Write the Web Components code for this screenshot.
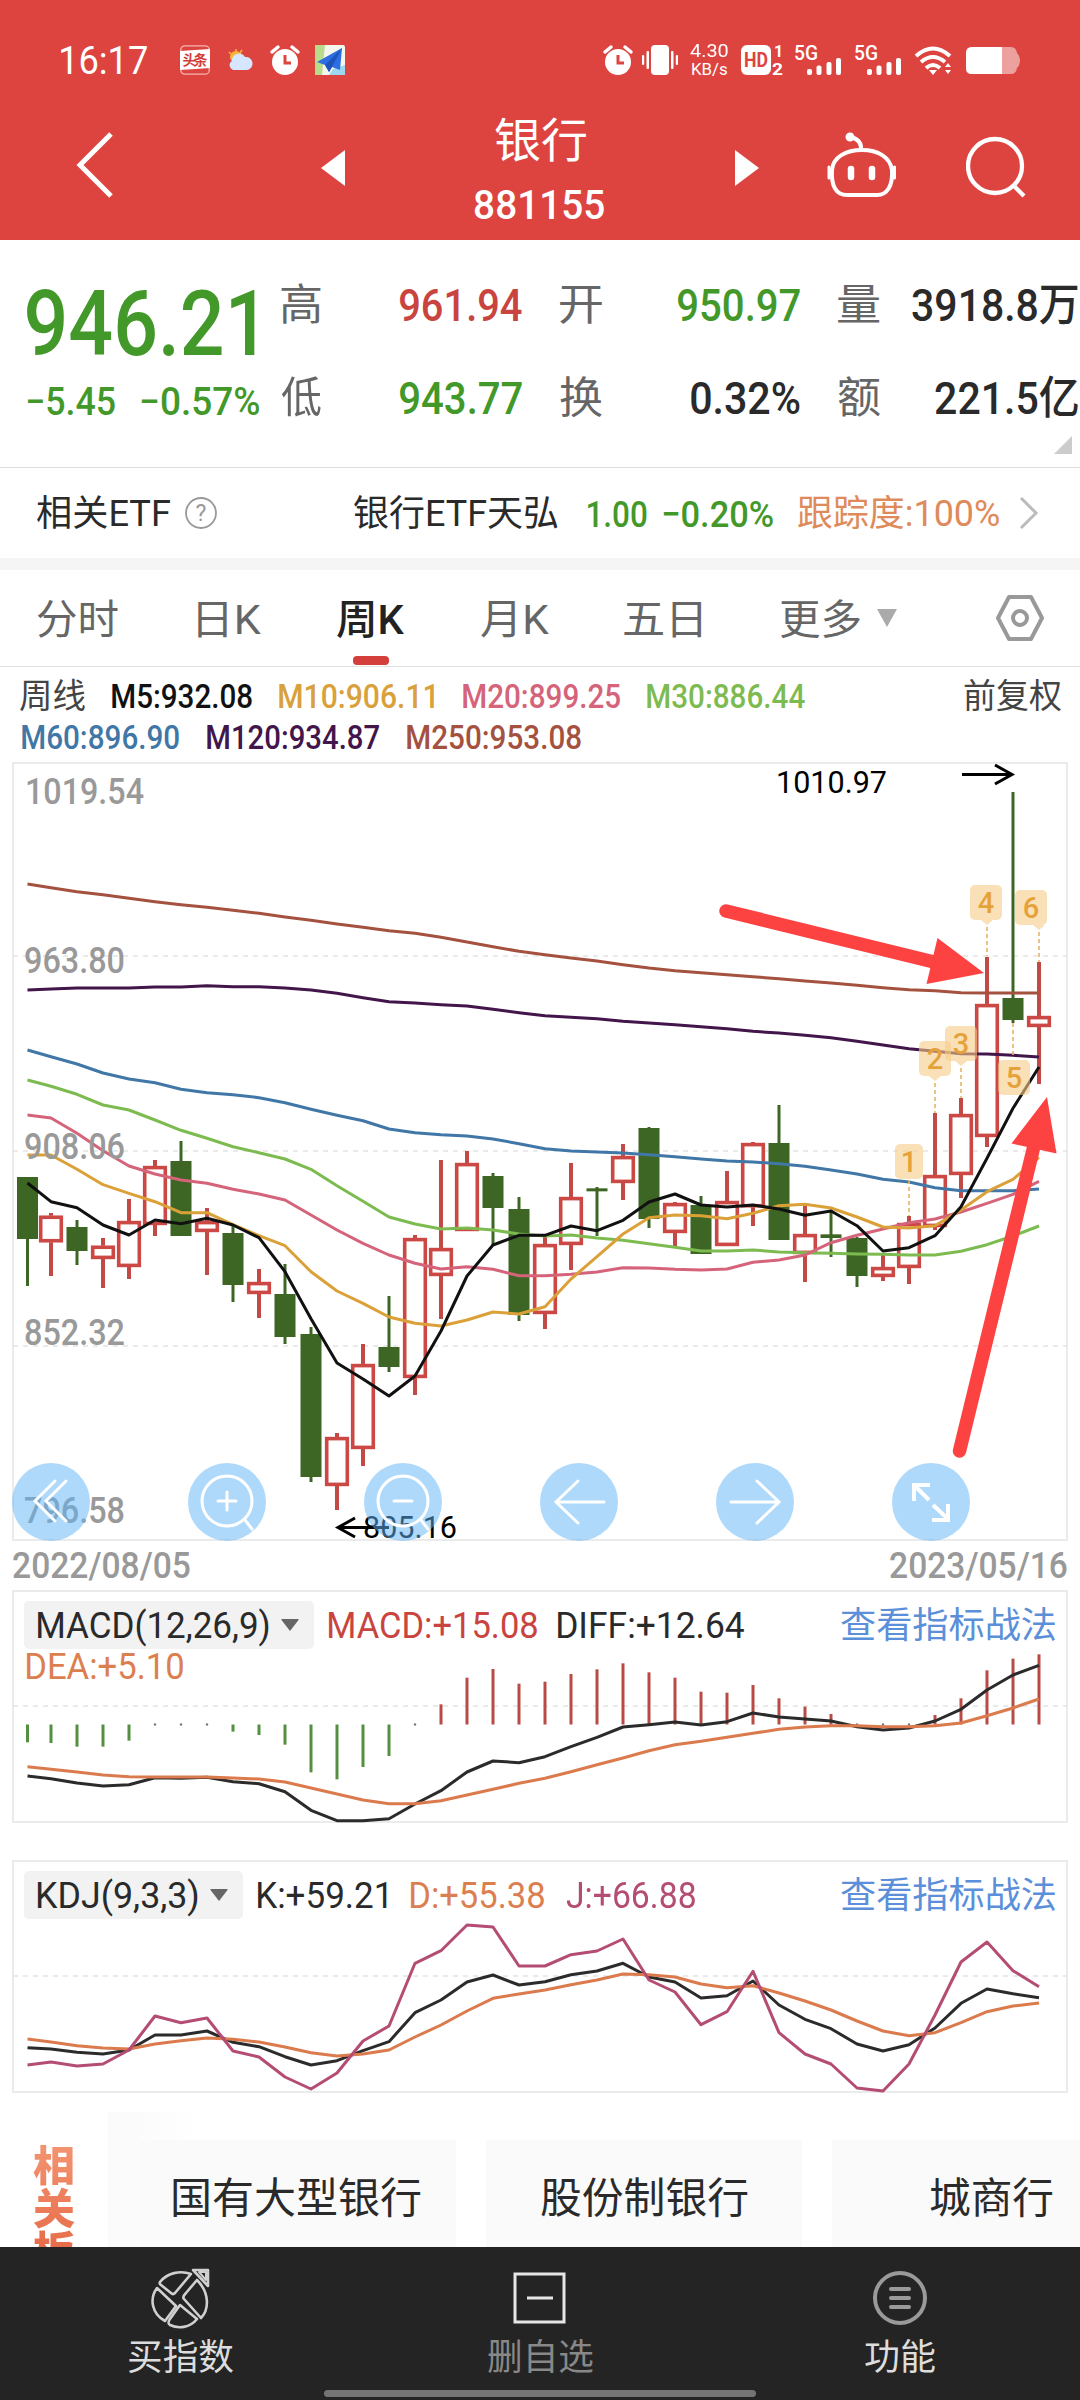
<!DOCTYPE html>
<html lang="zh-CN">
<head>
<meta charset="utf-8">
<meta name="viewport" content="width=1080">
<title>银行 881155</title>
<style>
html, body {
    margin: 0;
    padding: 0;
}
body {
    width: 1080px;
    height: 2400px;
    overflow: hidden;
    background: #fff;
    color: #2a2a2a;
    font-family: Roboto, "Noto Sans CJK SC", sans-serif;
}
</style>
</head>
<body>
<stock-page></stock-page>

<script>
const GREEN = "#43982a";
const RED = "#c9443f";
const ORANGE = "#dc7f50";

// week k data: [up, high, body top, body bottom, low], thirds of a pixel below y = 1120
const candles = [
    [0,171,171,357,498],[1,279,287,367,468],[0,300,321,393,435],[1,354,377,417,504],
    [1,237,303,441,477],[1,120,138,315,348],[0,63,123,348,348],[1,264,303,336,465],
    [0,318,339,495,546],[1,447,486,522,594],[0,432,522,651,672],[0,621,642,1071,1086],
    [1,939,951,1098,1170],[1,672,732,987,1038],[0,528,681,741,756],[1,345,354,774,825],
    [1,120,384,468,597],[1,93,129,333,333],[0,159,168,264,378],[0,231,267,585,603],
    [1,345,372,582,627],[1,129,231,375,450],[0,201,205,214,348],[1,72,108,189,240],
    [0,21,24,297,324],[1,246,249,339,378],[0,228,255,402,402],[1,153,243,378,378],
    [1,66,69,262,318],[0,-45,69,360,360],[1,258,342,402,486],[0,270,343,354,411],
    [0,351,354,468,501],[1,402,441,471,483],[1,288,309,444,492],[1,-21,165,321,330],
    [1,-66,-18,165,234],[1,-489,-348,51,81],[0,-984,-366,-300,-291],[1,-474,-312,-279,-108]
];

const averages = [
    { color: "#a5513f", base: 760, data: [372,383,395,404,415,425,434,442,451,460,471,481,492,502,512,520,532,546,560,574,584,594,603,614,624,632,638,644,650,656,663,669,676,683,689,692,698,699,699,699] },
    { color: "#42164a", base: 760, data: [690,687,684,684,684,681,681,677,680,680,684,690,700,713,725,729,734,738,748,758,767,772,776,784,789,794,800,806,814,819,826,833,844,855,866,874,881,882,886,891] },
    { color: "#4177a6", base: 760, data: [870,890,912,939,957,968,988,998,1004,1013,1028,1048,1066,1082,1107,1118,1124,1128,1137,1151,1166,1173,1176,1179,1184,1190,1197,1203,1206,1211,1219,1230,1242,1258,1266,1283,1292,1292,1292,1287] },
    { color: "#7dbb51", base: 1120, data: [-120,-101,-77,-45,-30,0,31,55,80,98,117,148,197,244,291,312,327,324,330,342,348,345,354,361,371,382,393,393,390,396,398,400,402,403,405,405,394,374,348,318] },
    { color: "#d5647a", base: 1120, data: [-15,-6,40,92,138,162,180,190,208,222,240,285,330,370,405,430,447,440,448,467,467,463,456,443,444,448,450,447,427,420,405,368,346,327,308,297,276,250,223,184] },
    { color: "#dba138", base: 1120, data: [105,105,148,194,220,245,278,278,314,347,377,455,513,550,591,610,618,600,576,582,560,477,410,342,293,285,287,296,280,257,253,264,291,321,324,317,270,215,178,112] },
    { color: "#111", base: 1120, data: [189,245,263,315,345,300,311,295,315,353,455,596,729,777,828,768,633,468,375,346,346,318,332,301,246,222,255,261,255,267,286,273,317,393,383,347,260,115,-35,-159] }
];

const macdBars = [487,489,500,500,482,437,440,430,455,465,494,577,598,561,528,430,373,293,267,311,305,282,268,250,277,293,335,338,315,355,380,402,433,432,432,405,355,271,236,223];
const macdLines = [
    { color: "#2b2b2b", base: 1580, data: [588,596,609,618,614,593,595,592,605,611,635,691,722,722,716,672,632,576,543,548,530,500,472,441,434,426,435,425,399,411,417,423,440,450,444,423,388,330,285,256] },
    { color: "#db7a4c", base: 1580, data: [560,568,576,585,590,591,591,591,594,597,606,624,642,660,671,671,662,645,628,610,595,575,554,534,512,494,484,472,460,448,441,437,437,440,440,437,429,407,384,357] }
];
const kdjLines = [
    { color: "#2b2b2b", base: 1840, data: [623,627,637,642,630,585,585,573,607,620,650,675,662,632,605,518,480,426,405,435,425,404,393,370,411,426,474,467,423,495,538,566,612,633,614,564,490,447,461,473] },
    { color: "#db7a4c", base: 1840, data: [597,606,617,624,627,612,602,594,598,606,621,638,648,642,630,591,555,513,475,462,450,434,420,402,404,411,432,443,437,459,483,510,543,573,587,578,548,515,498,489] },
    { color: "#b44c74", base: 1840, data: [675,666,678,672,630,528,548,534,633,651,711,747,699,603,558,370,332,255,261,378,378,344,333,297,420,456,554,515,394,578,642,672,744,753,672,525,366,306,392,440] }
];

function xAt(i) {
    return i === 0 ? 27.5 : 51 + 26 * (i - 1);
}

function polyline(line) {
    const points = line.data.map((v, i) => `${xAt(i)},${(line.base + v / 3).toFixed(1)}`).join(" ");
    return `<polyline points="${points}" fill="none" stroke="${line.color}" stroke-width="3" stroke-linejoin="round"/>`;
}

function dashLine(y) {
    return `<path d="M13 ${y}H1067" stroke="#e4e4e4" stroke-width="1.5" stroke-dasharray="5 5"/>`;
}

function define(name, html, ready) {
    customElements.define(name, class extends HTMLElement {
        constructor() {
            super();
            this.attachShadow({ mode: "open" });
        }
        connectedCallback() {
            this.shadowRoot.innerHTML = typeof html === "function" ? html(this) : html;
            if (ready) ready(this);
        }
    });
}

// one line of text squeezed to an exact ink width: w, size, gap (space before), weight
const pen = document.createElement("canvas").getContext("2d");
define("fit-text", el => `
    <style>
    :host {
        display: block;
        flex: none;
        width: ${el.getAttribute("w")}px;
        margin-left: ${el.getAttribute("gap") || 0}px;
        font-size: ${el.getAttribute("size")}px;
        font-weight: ${el.getAttribute("weight") || 400};
        line-height: 1.2;
        white-space: nowrap;
    }
    span {
        display: inline-block;
        transform-origin: 0 50%;
    }
    </style>
    <span>${el.getAttribute("text")}</span>
`, el => {
    const span = el.shadowRoot.querySelector("span");
    const cs = getComputedStyle(span);
    pen.font = `${cs.fontWeight} ${cs.fontSize} ${cs.fontFamily}`;
    const m = pen.measureText(el.getAttribute("text"));
    const scale = el.getAttribute("w") / (m.actualBoundingBoxLeft + m.actualBoundingBoxRight);
    span.style.transform = `translateX(${m.actualBoundingBoxLeft * scale}px) scaleX(${scale})`;
});

const alarm = `<circle cx="15" cy="17" r="13" fill="#fff"/><path d="M2 7L8 2M28 7L22 2" stroke="#fff" stroke-width="3.5" stroke-linecap="round"/><path d="M15 10V18H21" fill="none" stroke="#dd4440" stroke-width="3"/>`;
const signal = `<rect x="0" y="11" width="5" height="6" rx="2"/><rect x="9.5" y="7.5" width="5" height="9.5" rx="2"/><rect x="19.5" y="4" width="5" height="13" rx="2"/><rect x="29" y="0" width="5" height="17" rx="2"/>`;

define("status-bar", `
    <style>
    :host { display: flex; align-items: center; height: 120px; color: #fff; }
    svg { flex: none; display: block; overflow: visible; }
    .col { display: flex; flex-direction: column; justify-content: space-between; height: 36px; }
    .col fit-text { line-height: 17px; }
    </style>
    <fit-text text="16:17" w="86" size="38" gap="61" style="margin-top:4px"></fit-text>
    <svg width="30" height="30" viewBox="0 0 30 30" style="margin-left:33px">
        <rect x="0.8" y="0.8" width="28.4" height="28.4" rx="4" fill="#dd4440" stroke="#f5b5b2" stroke-width="1.3"/>
        <path d="M0 6L30 4V23L0 25Z" fill="#fff"/>
        <text x="15" y="20" text-anchor="middle" font-size="14" font-weight="700" textLength="25" fill="#d33c37">头条</text>
    </svg>
    <svg width="24" height="22" viewBox="0 0 24 22" style="margin-left:18px">
        <circle cx="8" cy="8" r="6" fill="#f8b53c"/><path d="M1 3L3 5M8 0V3M14 1L12 4" stroke="#f8b53c" stroke-width="1.5"/>
        <path d="M5 21A5 5 0 0 1 4 12A7 7 0 0 1 17 8A6.5 6.5 0 0 1 19 21Z" fill="#d7e6ff"/>
    </svg>
    <svg width="30" height="30" viewBox="0 0 30 30" style="margin-left:18px">${alarm}</svg>
    <svg width="30" height="30" viewBox="0 0 30 30" style="margin-left:15px">
        <rect width="30" height="30" rx="2" fill="#f3f7ee"/><path d="M0 0H10L7 30H0Z" fill="#b9dc8c"/><path d="M18 24L30 20V30H14Z" fill="#9cd7ef"/>
        <path d="M27 3L2 17L10 20L14 27L17 22L25 25Z" fill="#2c6fe0"/><path d="M27 3L10 20L14 27L17 22Z" fill="#1e55bd"/>
    </svg>
    <svg width="30" height="30" viewBox="0 0 30 30" style="margin-left:258px">${alarm}</svg>
    <svg width="36" height="30" viewBox="0 0 36 30" style="margin-left:9px" fill="#fff">
        <rect x="9" width="18" height="30" rx="4"/><rect x="4.5" y="6" width="2.5" height="18" rx="1"/><rect x="0" y="10" width="2.2" height="10" rx="1"/>
        <rect x="29" y="6" width="2.5" height="18" rx="1"/><rect x="33.8" y="10" width="2.2" height="10" rx="1"/>
    </svg>
    <div class="col" style="margin-left:12px">
        <fit-text text="4.30" w="38" size="19"></fit-text>
        <fit-text text="KB/s" w="35" size="17" gap="2"></fit-text>
    </div>
    <svg width="43" height="32" viewBox="0 0 43 32" style="margin-left:13px" fill="#fff">
        <rect y="1" width="30" height="30" rx="6"/>
        <text x="3" y="23" font-size="20" font-weight="700" textLength="24" lengthAdjust="spacingAndGlyphs" fill="#dd4440">HD</text>
        <text x="33" y="13" font-size="16" font-weight="700">1</text><text x="31" y="31" font-size="16" font-weight="700" textLength="11" lengthAdjust="spacingAndGlyphs">2</text>
    </svg>
    <svg width="48" height="32" viewBox="0 0 48 32" style="margin-left:10px" fill="#fff">
        <text x="0" y="16" font-size="20" font-weight="500" textLength="24" lengthAdjust="spacingAndGlyphs">5G</text><g transform="translate(13 14)">${signal}</g>
    </svg>
    <svg width="48" height="32" viewBox="0 0 48 32" style="margin-left:12px" fill="#fff">
        <text x="0" y="16" font-size="20" font-weight="500" textLength="24" lengthAdjust="spacingAndGlyphs">5G</text><g transform="translate(13 14)">${signal}</g>
    </svg>
    <svg width="38" height="30" viewBox="0 0 38 30" style="margin-left:13px" fill="none" stroke="#fff" stroke-width="4">
        <path d="M1 11Q18 -4 35 11M6 17Q18 7 30 17M11 23Q18 17 25 23"/><path d="M14 25H22L18 30Z" fill="#fff" stroke="none"/>
        <path d="M30 22L33 18L36 22ZM30 25L33 29L36 25Z" fill="#fff" stroke="none"/>
    </svg>
    <svg width="55" height="27" viewBox="0 0 55 27" style="margin-left:13px">
        <path d="M6 0H45Q50 0 51 6Q54 9 54 13Q54 18 51 21Q50 27 45 27H6Q0 27 0 21V6Q0 0 6 0Z" fill="#eda19f"/>
        <path d="M6 0H36V27H6Q0 27 0 21V6Q0 0 6 0Z" fill="#fff"/>
    </svg>
`);

define("nav-bar", `
    <style>
    :host { display: flex; align-items: center; height: 120px; color: #fff; }
    svg { flex: none; display: block; margin-bottom: 30px; }
    .title { display: flex; flex-direction: column; width: 130px; margin: 0 0 15px 130px; }
    .title fit-text { line-height: 65px; }
    </style>
    <svg width="38" height="66" viewBox="0 0 38 66" style="margin-left:75px" fill="none" stroke="#fff" stroke-width="5"><path d="M36 2L5 33L36 64"/></svg>
    <svg width="24" height="36" viewBox="0 0 24 36" style="margin-left:208px;margin-bottom:24px"><path d="M24 0V36L0 18Z" fill="#fff"/></svg>
    <div class="title">
        <fit-text text="银行" w="91" size="47" gap="20"></fit-text>
        <fit-text text="881155" w="129" size="41" weight="500"></fit-text>
    </div>
    <svg width="24" height="36" viewBox="0 0 24 36" style="margin-left:130px;margin-bottom:24px"><path d="M0 0V36L24 18Z" fill="#fff"/></svg>
    <svg width="72" height="66" viewBox="0 0 72 66" style="margin-left:66px" fill="none" stroke="#fff" stroke-width="4" stroke-linecap="round">
        <path d="M36 18Q37 8 26 5"/><circle cx="25" cy="5" r="2.5" fill="#fff"/>
        <path d="M7 38C8 25 21 18 37 18S65 25 67 38C68 54 62 63 52 63H22C11 63 6 54 7 38Z"/>
        <path d="M4 35V46M69.500 35V46" stroke-width="3"/><path d="M26 37V45M47 37V45" stroke-width="6.5"/>
    </svg>
    <svg width="62" height="62" viewBox="0 0 62 62" style="margin-left:69px;margin-bottom:26px" fill="none" stroke="#fff" stroke-width="4.3"><circle cx="29" cy="30" r="27"/><path d="M48 50L58 60"/></svg>
`);

define("quote-panel", `
    <style>
    :host { display: flex; height: 227px; border-bottom: 1px solid #dedede; overflow: hidden; position: relative; }
    .last { width: 260px; color: ${GREEN}; }
    .change { display: flex; }
    .grid { flex: none; display: grid; grid-template-rows: 93px 93px; padding-top: 19px; width: 820px; }
    .row { display: flex; align-items: center; color: #2a2a2a; }
    .row fit-text:nth-child(odd) { color: #666; }
    .up { color: ${RED}; }
    .row .down { color: ${GREEN}; }
    i { position: absolute; right: 8px; top: 196px; border: 9px solid; border-color: transparent #ccc #ccc transparent; }
    </style>
    <div class="last">
        <fit-text text="946.21" w="228" size="91" weight="500" gap="27" style="margin-top:30px"></fit-text>
        <div class="change">
            <fit-text text="−5.45" w="88" size="39" weight="500" gap="27"></fit-text>
            <fit-text text="−0.57%" w="118" size="39" weight="500" gap="26"></fit-text>
        </div>
    </div>
    <div class="grid">
        <div class="row">
            <fit-text text="高" w="40" size="43" gap="21"></fit-text><fit-text class="up" text="961.94" w="122" size="45" weight="500" gap="79"></fit-text>
            <fit-text text="开" w="42" size="43" gap="38"></fit-text><fit-text class="down" text="950.97" w="122" size="45" weight="500" gap="76"></fit-text>
            <fit-text text="量" w="42" size="43" gap="38"></fit-text><fit-text text="3918.8万" w="166" size="45" weight="500" gap="32"></fit-text>
        </div>
        <div class="row">
            <fit-text text="低" w="40" size="43" gap="21"></fit-text><fit-text class="down" text="943.77" w="122" size="45" weight="500" gap="79"></fit-text>
            <fit-text text="换" w="42" size="43" gap="38"></fit-text><fit-text text="0.32%" w="109" size="45" weight="500" gap="89"></fit-text>
            <fit-text text="额" w="42" size="43" gap="38"></fit-text><fit-text text="221.5亿" w="143" size="45" weight="500" gap="55"></fit-text>
        </div>
    </div>
    <i></i>
`);

define("etf-row", `
    <style>
    :host { display: flex; align-items: center; height: 90px; border-bottom: 12px solid #f5f5f5; }
    svg { flex: none; }
    fit-text { padding-top: 4px; }
    </style>
    <fit-text text="相关ETF" w="133" size="36" gap="37"></fit-text>
    <svg width="34" height="34" viewBox="0 0 34 34" style="margin-left:14px"><circle cx="17" cy="17" r="15" fill="none" stroke="#999" stroke-width="1.8"/><text x="17" y="25" text-anchor="middle" font-size="23" fill="#999">?</text></svg>
    <fit-text text="银行ETF天弘" w="204" size="36" gap="136"></fit-text>
    <fit-text text="1.00" w="59" size="37" weight="500" gap="30" style="color:${GREEN}"></fit-text>
    <fit-text text="−0.20%" w="110" size="37" weight="500" gap="16" style="color:${GREEN}"></fit-text>
    <fit-text text="跟踪度:100%" w="201" size="36" gap="25" style="color:#df8a5b"></fit-text>
    <svg width="20" height="34" viewBox="0 0 20 34" style="margin-left:20px" fill="none" stroke="#bbb" stroke-width="3"><path d="M2 2L17 17L2 32"/></svg>
`);

define("period-tabs", `
    <style>
    :host { display: flex; align-items: center; height: 96px; border-bottom: 1px solid #e2e2e2; color: #666; }
    .on { position: relative; margin-left: 76px; color: #222; }
    .on::after { content: ""; position: absolute; left: 16px; top: 65px; width: 36px; height: 9px; border-radius: 4px; background: #d43f3b; }
    svg { flex: none; }
    fit-text { padding-top: 5px; }
    </style>
    <fit-text text="分时" w="81" size="41" gap="37"></fit-text>
    <fit-text text="日K" w="63" size="41" gap="80"></fit-text>
    <div class="on"><fit-text text="周K" w="68" size="41" weight="500"></fit-text></div>
    <fit-text text="月K" w="68" size="41" gap="76"></fit-text>
    <fit-text text="五日" w="78" size="41" gap="75"></fit-text>
    <fit-text text="更多" w="80" size="41" gap="78"></fit-text>
    <svg width="22" height="18" viewBox="0 0 22 18" style="margin-left:16px"><path d="M1 0H21L11 18Z" fill="#aaa"/></svg>
    <svg width="50" height="48" viewBox="0 0 50 48" style="margin-left:97px" fill="none" stroke="#999" stroke-width="4" stroke-linejoin="round"><path d="M14 3H36L47 24L36 45H14L3 24Z"/><circle cx="25" cy="24" r="7"/></svg>
`);

define("ma-legend", `
    <style>
    :host { display: block; height: 95px; padding-top: 9px; box-sizing: border-box; }
    div { display: flex; align-items: center; height: 41px; }
    div:first-child { height: 42px; }
    </style>
    <div>
        <fit-text text="周线" w="65" size="34" gap="20" style="color:#444"></fit-text>
        <fit-text text="M5:932.08" w="140" size="34" weight="500" gap="27" style="color:#111"></fit-text>
        <fit-text text="M10:906.11" w="155" size="34" weight="500" gap="27" style="color:#d9a13c"></fit-text>
        <fit-text text="M20:899.25" w="157" size="34" weight="500" gap="29" style="color:#d5647a"></fit-text>
        <fit-text text="M30:886.44" w="158" size="34" weight="500" gap="27" style="color:#7dbb51"></fit-text>
        <fit-text text="前复权" w="97" size="34" gap="159" style="color:#444"></fit-text>
    </div>
    <div>
        <fit-text text="M60:896.90" w="157" size="34" weight="500" gap="22" style="color:#4177a6"></fit-text>
        <fit-text text="M120:934.87" w="172" size="34" weight="500" gap="28" style="color:#42164a"></fit-text>
        <fit-text text="M250:953.08" w="174" size="34" weight="500" gap="28" style="color:#a5513f"></fit-text>
    </div>
`);

function candle(c, i) {
    const x = xAt(i);
    const [up, high, top, bottom, low] = c.map((v, k) => k ? 1120 + v / 3 : v);
    if (up) {
        return `<path d="M${x} ${high}V${top}M${x} ${bottom}V${low}" stroke="#c24a46" stroke-width="4"/>
            <rect x="${x - 10.3}" y="${top + 1.6}" width="20.6" height="${bottom - top - 3.2}" fill="#fff" stroke="#cc4845" stroke-width="3.6"/>`;
    }
    return `<path d="M${x} ${high}V${low}" stroke="#3d6624" stroke-width="3"/><rect x="${x - 10.5}" y="${top}" width="21" height="${bottom - top}" fill="#3d6624"/>`;
}

// numbered tags: [number, box left, box top, dash x, dash from, dash to, tip]
const tags = [
    ["1",895,1144,909,1180,1216,0],["2",919,1041,935,1083,1113,1],["3",945,1026,961,1068,1098,1],
    ["4",970,885,987,927,956,1],["5",998,1060,1013,1023,1058,0],["6",1015,890,1039,932,962,1]
];

function tag([n, x, y, dx, from, to, tip]) {
    const w = n === "1" ? 28 : 32;
    return `<rect x="${x}" y="${y}" width="${w}" height="35" rx="5" fill="#f6cb86" fill-opacity=".6"/>
        ${tip ? `<path d="M${dx - 6} ${y + 35}H${dx + 6}L${dx} ${y + 40}Z" fill="#f6cb86" fill-opacity=".6"/>` : ""}
        <path d="M${dx} ${from}V${to}" stroke="#e6b565" stroke-width="1.6" stroke-dasharray="4 3"/>
        <text x="${x + w / 2}" y="${y + 28}" text-anchor="middle" font-size="29" font-weight="500" fill="#e6a23a">${n}</text>`;
}

function axisLabel(text, x, y, w) {
    return `<text x="${x}" y="${y}" textLength="${w}" lengthAdjust="spacingAndGlyphs" font-size="36" font-weight="500" fill="#999">${text}</text>`;
}

define("round-button", `
    <style>
    :host { display: block; width: 78px; height: 78px; border-radius: 50%; background: rgba(97,180,248,.51); }
    ::slotted(svg) { display: block; width: 78px; height: 78px; fill: none; stroke: #fff; stroke-width: 3; stroke-linecap: round; }
    </style>
    <slot></slot>
`);

define("k-chart", () => `
    <style>
    :host { display: block; position: relative; height: 779px; }
    .chart { display: block; }
    .marks { position: absolute; left: 0; top: 0; }
    .tools { position: absolute; left: 12px; top: 701px; display: flex; gap: 98px; }
    </style>
    <svg class="chart" width="1080" height="779" viewBox="0 762 1080 779">
        <rect x="13" y="763" width="1054" height="777" fill="none" stroke="#ebebeb" stroke-width="2"/>
        ${[956, 1151, 1346].map(dashLine).join("")}
        ${candles.map(candle).join("")}
        ${averages.map(polyline).join("")}
        ${axisLabel("1019.54", 25, 804, 119)}
        ${axisLabel("963.80", 24, 973, 101)}
        ${axisLabel("908.06", 24, 1159, 101)}
        ${axisLabel("852.32", 24, 1345, 101)}
        ${axisLabel("796.58", 24, 1523, 101)}
        ${tags.map(tag).join("")}
        <g fill="#000" font-size="32">
            <text x="776" y="793" textLength="111" lengthAdjust="spacingAndGlyphs">1010.97</text>
            <text x="363" y="1538" textLength="94" lengthAdjust="spacingAndGlyphs">805.16</text>
        </g>
        <path d="M962 774.5H1012M995 765L1012 774.500L995 784M389 1527.5H338M355 1518L338 1527.5L355 1537" fill="none" stroke="#000" stroke-width="3"/>
    </svg>
    <div class="tools">
        <round-button><svg viewBox="0 0 78 78"><path d="M43 18L23 38L43 58M54 18L34 38L54 58"/></svg></round-button>
        <round-button><svg viewBox="0 0 78 78"><circle cx="39" cy="38" r="25"/><path d="M39 29V47M30 38H48M57 57L64 66"/></svg></round-button>
        <round-button><svg viewBox="0 0 78 78"><circle cx="39" cy="38" r="25"/><path d="M30 38H48M57 57L64 66"/></svg></round-button>
        <round-button><svg viewBox="0 0 78 78"><path d="M64 39H16M38 18L16 39L38 60"/></svg></round-button>
        <round-button><svg viewBox="0 0 78 78"><path d="M15 39H62M41 18L63 39L41 60"/></svg></round-button>
        <round-button><svg viewBox="0 0 78 78" style="stroke-width:4;stroke-linecap:butt"><path d="M37 37L22 22M22 38V22H38M41 42L56 56M56 41V57H40"/></svg></round-button>
    </div>
    <svg class="marks" width="1080" height="779" viewBox="0 762 1080 779" fill="#fd4242">
        <path d="M726 911L938 963M959.500 1451L1034 1146" stroke="#fd4242" stroke-width="13.5" stroke-linecap="round"/>
        <path d="M984 973L937.5 938L926.5 984ZM1047 1097L1011.5 1143.5L1056.5 1153.5Z"/>
    </svg>
`);

define("date-range", `
    <style>
    :host { display: flex; justify-content: space-between; align-items: center; height: 49px; padding: 2px 13px 0; box-sizing: border-box; color: #999; }
    </style>
    <fit-text text="2022/08/05" w="177" size="37" weight="500"></fit-text>
    <fit-text text="2023/05/16" w="177" size="37" weight="500"></fit-text>
`);

// picker with a drop-down mark, the value legend comes through the slot
define("indicator-chart", el => {
    const macd = el.getAttribute("kind") === "macd";
    const top = macd ? 1590 : 1860;
    const zero = 1724.5;
    const bars = macdBars.map((v, i) => {
        const y = 1580 + v / 3;
        if (Math.abs(y - zero) < 3) return `<circle cx="${xAt(i)}" cy="${zero}" r="1.2" fill="#777"/>`;
        return `<path d="M${xAt(i)} ${zero}V${y}" stroke="${y > zero ? "#559040" : "#b84b46"}" stroke-width="3"/>`;
    }).join("");
    return `
    <style>
    :host { display: grid; height: 233px; }
    svg, .legend { grid-area: 1 / 1; }
    .legend { padding: 11px 0 0 24px; }
    .line { display: flex; align-items: center; height: 48px; }
    .pick { display: flex; align-items: center; flex: none; width: ${macd ? 290 : 219}px; height: 48px; border-radius: 5px; background: #f2f2f2; }
    .pick svg { margin-left: 12px; }
    .link { color: #5b8fd9; margin-left: auto; padding-right: 25px; }
    fit-text, ::slotted(fit-text) { padding-top: 3px; }
    </style>
    <svg width="1080" height="233" viewBox="0 ${top} 1080 233">
        <rect x="13" y="${top + 1}" width="1054" height="231" fill="none" stroke="#ebebeb" stroke-width="2"/>
        ${dashLine(top + 116)}
        ${macd ? bars : ""}
        ${(macd ? macdLines : kdjLines).map(polyline).join("")}
    </svg>
    <div class="legend">
        <div class="line">
            <div class="pick">
                <fit-text text="${macd ? "MACD(12,26,9)" : "KDJ(9,3,3)"}" w="${macd ? 231 : 160}" size="37" gap="14"></fit-text>
                <svg width="18" height="12" viewBox="0 0 18 12"><path d="M1 0H17Q18 0 17.5 1L9 12L0.5 1Q0 0 1 0Z" fill="#666"/></svg>
            </div>
            <slot></slot>
            <div class="link"><fit-text text="查看指标战法" w="214" size="36"></fit-text></div>
        </div>
        <slot name="more"></slot>
    </div>`;
});

define("related-boards", `
    <style>
    :host { display: flex; height: 154px; overflow: hidden; }
    .side {
        flex: none; width: 42px; height: 130px; margin: 52px 33px 0; font-size: 42px; font-weight: 900; line-height: 43px;
        background: linear-gradient(#f39471, #e4623f); -webkit-background-clip: text; color: transparent;
    }
    .list { display: flex; gap: 30px; flex: none; height: 135px; margin-top: 19px; padding: 28px 0 0 32px; box-sizing: border-box; background: linear-gradient(90deg, #fafafa, #fff 90px); }
    .card { display: flex; align-items: center; flex: none; width: 316px; height: 107px; background: #fafafa; padding-top: 11px; box-sizing: border-box; }
    </style>
    <div class="side">相<br>关<br>板</div>
    <div class="list">
        <div class="card"><fit-text text="国有大型银行" w="248" size="42" gap="33"></fit-text></div>
        <div class="card"><fit-text text="股份制银行" w="207" size="42" gap="55"></fit-text></div>
        <div class="card"><fit-text text="城商行" w="123" size="42" gap="98"></fit-text></div>
    </div>
`);

define("bottom-bar", `
    <style>
    :host { display: grid; grid-template-columns: repeat(3, 1fr); height: 153px; background: #242424; color: #ddd; position: relative; }
    .item { display: flex; flex-direction: column; align-items: center; padding-top: 21px; }
    .item fit-text { margin-top: 7px; }
    svg { display: block; }
    .home { position: absolute; left: 324px; top: 143px; width: 432px; height: 7px; border-radius: 4px; background: #747474; }
    </style>
    <div class="item">
        <svg width="60" height="62" viewBox="0 0 60 62" fill="none" stroke="#d0d0d0" stroke-width="2.6" stroke-linejoin="round">
            <path d="M10 14C17 5 30 2 41 6L25 25Q23 27 21 25L11 17Q9 16 10 14ZM7 20L26 38L15 53C2 46 -1 31 7 20ZM36 25L47 12C60 25 59 42 51 50L34 31Q32 29 36 25ZM20 51L30 37L47 51C40 60 28 61 20 57Q17 55 20 51Z"/>
            <path d="M43 2H58V18Z"/><path d="M49 4H56V12Z" stroke-width="2"/>
        </svg>
        <fit-text text="买指数" w="105" size="36"></fit-text>
    </div>
    <div class="item">
        <svg width="60" height="62" viewBox="0 0 60 62" fill="none" stroke="#e6e6e6" stroke-width="3"><rect x="5" y="6" width="49" height="48"/><path d="M17 30H43"/></svg>
        <fit-text text="删自选" w="105" size="36" style="color:#888"></fit-text>
    </div>
    <div class="item">
        <svg width="60" height="62" viewBox="0 0 60 62" fill="none" stroke="#9a9a9a" stroke-width="4"><circle cx="30" cy="30" r="25"/><path d="M21 21H39M21 30H39M21 39H39" stroke-linecap="round"/></svg>
        <fit-text text="功能" w="70" size="36"></fit-text>
    </div>
    <div class="home"></div>
`);

define("stock-page", `
    <style>
    :host { display: flex; flex-direction: column; width: 1080px; height: 2400px; overflow: hidden; }
    header { background: #dd4440; }
    indicator-chart + indicator-chart { margin-top: 37px; }
    </style>
    <header>
        <status-bar></status-bar>
        <nav-bar></nav-bar>
    </header>
    <quote-panel></quote-panel>
    <etf-row></etf-row>
    <period-tabs></period-tabs>
    <ma-legend></ma-legend>
    <k-chart></k-chart>
    <date-range></date-range>
    <indicator-chart kind="macd">
        <fit-text text="MACD:+15.08" w="208" size="37" gap="15" style="color:${RED}"></fit-text>
        <fit-text text="DIFF:+12.64" w="186" size="37" gap="21"></fit-text>
        <fit-text slot="more" text="DEA:+5.10" w="156" size="37" gap="3" style="color:${ORANGE};margin-top:-7px"></fit-text>
    </indicator-chart>
    <indicator-chart kind="kdj">
        <fit-text text="K:+59.21" w="129" size="37" gap="15"></fit-text>
        <fit-text text="D:+55.38" w="133" size="37" gap="24" style="color:${ORANGE}"></fit-text>
        <fit-text text="J:+66.88" w="129" size="37" gap="22" style="color:#b44c74"></fit-text>
    </indicator-chart>
    <related-boards></related-boards>
    <bottom-bar></bottom-bar>
`);
</script>
</body>
</html>
